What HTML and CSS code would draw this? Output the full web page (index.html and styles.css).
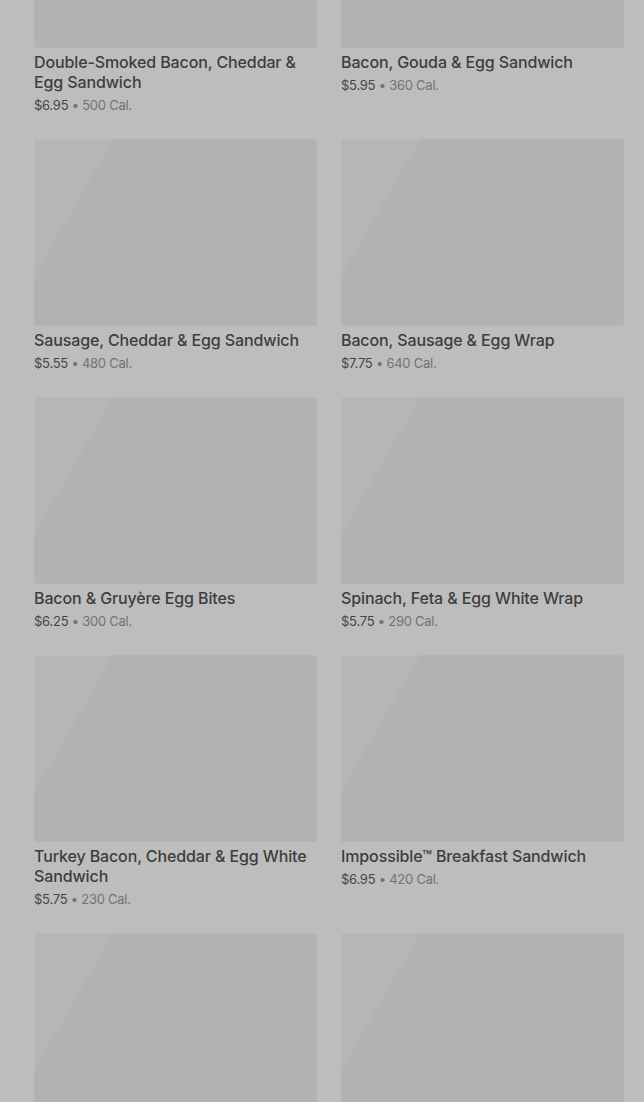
FILE: index.html
```html
<!DOCTYPE html>
<html lang="en">
<head>
    <meta charset="UTF-8">
    <meta name="viewport" content="width=device-width, initial-scale=1.0">
    <title>Breakfast Menu</title>
    <link rel="stylesheet" href="styles.css">
</head>
<body>
    <main class="menu">
        <div class="menu-grid">
            <div class="menu-item">
                <div class="menu-photo"></div>
                <h3>Double-Smoked Bacon, Cheddar &amp; Egg Sandwich</h3>
                <p class="menu-meta"><span class="price">$6.95</span> • 500 Cal.</p>
            </div>
            <div class="menu-item">
                <div class="menu-photo"></div>
                <h3>Bacon, Gouda &amp; Egg Sandwich</h3>
                <p class="menu-meta"><span class="price">$5.95</span> • 360 Cal.</p>
            </div>
            <div class="menu-item">
                <div class="menu-photo"></div>
                <h3>Sausage, Cheddar &amp; Egg Sandwich</h3>
                <p class="menu-meta"><span class="price">$5.55</span> • 480 Cal.</p>
            </div>
            <div class="menu-item">
                <div class="menu-photo"></div>
                <h3>Bacon, Sausage &amp; Egg Wrap</h3>
                <p class="menu-meta"><span class="price">$7.75</span> • 640 Cal.</p>
            </div>
            <div class="menu-item">
                <div class="menu-photo"></div>
                <h3>Bacon &amp; Gruyère Egg Bites</h3>
                <p class="menu-meta"><span class="price">$6.25</span> • 300 Cal.</p>
            </div>
            <div class="menu-item">
                <div class="menu-photo"></div>
                <h3>Spinach, Feta &amp; Egg White Wrap</h3>
                <p class="menu-meta"><span class="price">$5.75</span> • 290 Cal.</p>
            </div>
            <div class="menu-item">
                <div class="menu-photo"></div>
                <h3>Turkey Bacon, Cheddar &amp; Egg White Sandwich</h3>
                <p class="menu-meta"><span class="price">$5.75</span> • 230 Cal.</p>
            </div>
            <div class="menu-item">
                <div class="menu-photo"></div>
                <h3>Impossible™ Breakfast Sandwich</h3>
                <p class="menu-meta"><span class="price">$6.95</span> • 420 Cal.</p>
            </div>
            <div class="menu-item">
                <div class="menu-photo"></div>
            </div>
            <div class="menu-item">
                <div class="menu-photo"></div>
            </div>
        </div>
    </main>
</body>
</html>
```

FILE: styles.css
```css
body {
    margin: 0;
    padding: 0;
    background: #bdbdbd;
    font-family: 'Inter', 'Liberation Sans', sans-serif;
    color: #3b3b3b;
    overflow: hidden;
}
.menu {
    padding: 0 20px 0 34px;
}
/* page is scrolled, first row photos are cut off at the top */
.menu-grid {
    margin-top: -139px;
    display: grid;
    grid-template-columns: 283px 283px;
    column-gap: 24px;
    row-gap: 26px;
    align-items: start;
}
.menu-photo {
    height: 187px;
    border-radius: 2px;
    background: linear-gradient(120deg, #b6b6b6 0%, #b6b6b6 20%, #b2b2b2 20.5%, #b2b2b2 100%);
    box-shadow: inset 0 0 0 1px rgba(255, 255, 255, 0.05);
}
.menu-item h3 {
    margin: 4px 0 0;
    font-size: 16px;
    line-height: 20px;
    font-weight: 500;
    color: #3d3d3d;
    letter-spacing: -0.12px;
}
.menu-meta {
    margin: 5px 0 0;
    font-size: 13px;
    line-height: 16px;
    color: #737373;
    letter-spacing: -0.25px;
}
.menu-meta .price {
    color: #454545;
}
```
